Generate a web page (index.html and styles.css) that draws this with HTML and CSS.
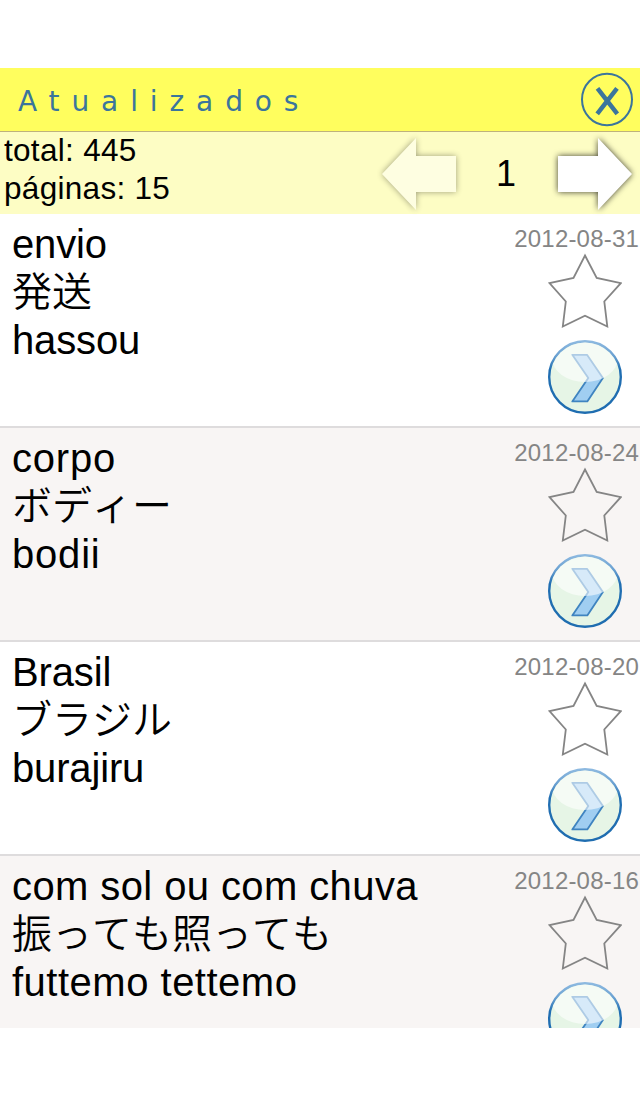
FILE: index.html
```
<!DOCTYPE html>
<html lang="pt">
<head>
<meta charset="utf-8">
<title>Atualizados</title>
<link rel="stylesheet" href="styles.css">
</head>
<body>
<svg width="0" height="0" class="defs" aria-hidden="true">
  <defs>
    <linearGradient id="rim" x1="0" y1="0" x2="0" y2="1">
      <stop offset="0" stop-color="#8db9e0"/>
      <stop offset=".2" stop-color="#6ba1d2"/>
      <stop offset=".4" stop-color="#206eb2"/>
      <stop offset="1" stop-color="#1f6db0"/>
    </linearGradient>
    <clipPath id="disc"><circle cx="37" cy="37" r="34.5"/></clipPath>
    <symbol id="star" viewBox="0 0 74 76">
      <path d="M37 2.5L48.7 25L72.8 30.2L56.3 48.5L59.3 73.5L37 62.7L14.8 73.5L17.8 48.5L1.5 30.2L25.5 25Z" fill="none" stroke="#858585" stroke-width="1.8"/>
    </symbol>
    <symbol id="go" viewBox="0 0 74 74">
      <circle cx="37" cy="37" r="35.8" fill="#e6f5e6" stroke="url(#rim)" stroke-width="2.4"/>
      <path d="M24.3 14.8H39L54.9 38L39.3 61.4H24.3L40.3 38Z" fill="#a0cef1" stroke="#3f84c0" stroke-width="1.8" stroke-linejoin="round"/>
      <ellipse cx="37" cy="18" rx="33" ry="24" fill="#fff" opacity=".58" clip-path="url(#disc)"/>
    </symbol>
  </defs>
</svg>
<main class="app">
  <header class="header">
    <h1 class="title">Atualizados</h1>
    <svg class="close" viewBox="0 0 54 56" role="img" aria-label="Fechar">
      <ellipse cx="27" cy="27.5" rx="25" ry="25.8" fill="none" stroke="#3b759c" stroke-width="2"/>
      <path d="M17.5 16.3L37.3 41.8M37 16.3L17.2 41.8" stroke="#3b759c" stroke-width="4.5"/>
    </svg>
  </header>
  <section class="pager">
    <div class="totals">total: 445<br>páginas: 15</div>
    <svg class="arrow disabled" viewBox="0 0 80 78"><path d="M2 39L36 3V21H76V57H36V75Z" fill="#fff"/></svg>
    <span class="page">1</span>
    <svg class="arrow" viewBox="0 0 80 78"><path d="M78 39L44 3V21H4V57H44V75Z" fill="#fff"/></svg>
  </section>
  <ul class="list">
    <li class="row">
      <div class="words"><p>envio</p><p lang="ja" class="ja">発送</p><p>hassou</p></div>
      <div class="side"><time>2012-08-31</time><svg class="star"><use href="#star"/></svg><svg class="go"><use href="#go"/></svg></div>
    </li>
    <li class="row">
      <div class="words"><p class="wide">corpo</p><p lang="ja" class="ja">ボディー</p><p class="wide">bodii</p></div>
      <div class="side"><time>2012-08-24</time><svg class="star"><use href="#star"/></svg><svg class="go"><use href="#go"/></svg></div>
    </li>
    <li class="row">
      <div class="words"><p>Brasil</p><p lang="ja" class="ja">ブラジル</p><p>burajiru</p></div>
      <div class="side"><time>2012-08-20</time><svg class="star"><use href="#star"/></svg><svg class="go"><use href="#go"/></svg></div>
    </li>
    <li class="row">
      <div class="words"><p class="phrase">com sol ou com chuva</p><p lang="ja" class="ja">振っても照っても</p><p class="reading">futtemo tettemo</p></div>
      <div class="side"><time>2012-08-16</time><svg class="star"><use href="#star"/></svg><svg class="go"><use href="#go"/></svg></div>
    </li>
  </ul>
</main>
</body>
</html>
```
FILE: styles.css
```
* { box-sizing: border-box; margin: 0; padding: 0; }
body {
  height: 1096px;
  padding: 68px 0;
  background: #fff;
  color: #000;
  font-family: "Liberation Sans", "Noto Sans CJK JP", sans-serif;
  overflow: hidden;
}
.defs { display: block; height: 0; }
svg { display: block; flex: none; }
.app { width: 640px; height: 960px; overflow: hidden; }
.header {
  display: flex;
  align-items: center;
  justify-content: space-between;
  height: 64px;
  padding: 0 6px 0 18px;
  background: #fffe5e;
  border-bottom: 1px solid #beb27c;
}
.title {
  padding-top: 4px;
  color: #3b759c;
  font: 400 28px/32px "DejaVu Sans", sans-serif;
  letter-spacing: 11.9px;
}
.close { width: 54px; height: 56px; }
.pager {
  display: flex;
  height: 82px;
  padding-right: 6px;
  background: #fdfdc4;
}
.totals {
  flex: 1;
  margin-top: -1px;
  padding-left: 4px;
  font-size: 31.5px;
  line-height: 38px;
  letter-spacing: .3px;
}
.arrow {
  width: 80px;
  height: 78px;
  margin-top: 3px;
  overflow: visible;
  filter: drop-shadow(0 0 3px rgba(0, 0, 0, .75));
}
.arrow.disabled { opacity: .5; }
.page {
  width: 94px;
  padding-right: 2px;
  text-align: center;
  font-size: 36px;
  line-height: 84px;
}
.list { list-style: none; }
.row {
  display: flex;
  justify-content: space-between;
  height: 214px;
  border-bottom: 2px solid #dedcdd;
}
.row:nth-child(even) { background: #f8f5f4; }
.words {
  padding: 6px 0 0 12px;
  font-size: 40px;
  line-height: 48px;
  letter-spacing: -.15px;
}
.words p { height: 48px; white-space: nowrap; }
.wide { letter-spacing: .8px; }
.phrase { letter-spacing: .4px; }
.reading { letter-spacing: .5px; }
.words .ja {
  font-family: "Noto Sans CJK JP", sans-serif;
  font-weight: 350;
  font-kerning: none;
  letter-spacing: 0;
  line-height: 43px;
}
.side {
  display: flex;
  flex-direction: column;
  align-items: flex-end;
  padding-top: 11px;
}
time {
  padding-right: 1px;
  color: #858585;
  font-size: 24px;
  line-height: 28px;
  letter-spacing: .2px;
}
.star { width: 74px; height: 76px; margin-right: 18px; }
.go { width: 74px; height: 74px; margin: 11px 18px 0 0; }
```
